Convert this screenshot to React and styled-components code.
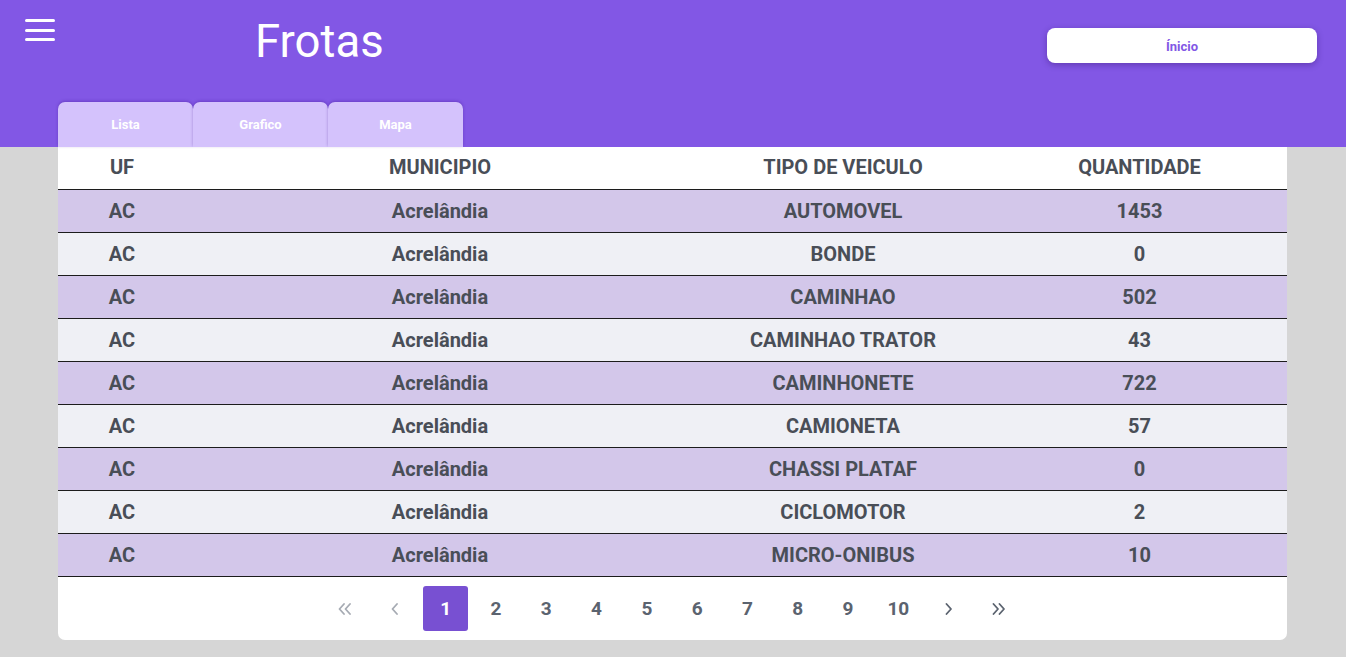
import React from "react";
import styled, { createGlobalStyle } from "styled-components";

const Global = createGlobalStyle`
  html, body { margin: 0; padding: 0; background: #d6d6d6; }
  body { font-family: Roboto, "Liberation Sans", sans-serif; }
  * { box-sizing: border-box; }
`;

const Page = styled.div`
  min-height: 657px;
  background: #d6d6d6;
`;

const Header = styled.header`
  height: 147px;
  background: #8257e5;
  display: flex;
  flex-direction: column;
  justify-content: space-between;
  padding: 0 29px 0 58px;
`;

const TopBar = styled.div`
  position: relative;
  display: flex;
  align-items: flex-start;
`;

const Burger = styled.button`
  position: absolute;
  left: -33px;
  top: 19px;
  width: 30px;
  height: 22px;
  padding: 0;
  border: none;
  background: none;
  display: flex;
  flex-direction: column;
  justify-content: space-between;
  cursor: pointer;
`;

const BurgerLine = styled.span`
  display: block;
  height: 3px;
  border-radius: 2px;
  background: #ffffff;
`;

const Title = styled.h1`
  margin: 15px 0 0 197px;
  font-weight: 400;
  font-size: 45.5px;
  line-height: 54px;
  color: #ffffff;
  flex: 1;
`;

const HomeButton = styled.button`
  margin-top: 28px;
  width: 270px;
  height: 35px;
  border: none;
  border-radius: 8px;
  background: #ffffff;
  color: #8257e5;
  font-family: Roboto, "Liberation Sans", sans-serif;
  font-weight: 700;
  font-size: 13px;
  box-shadow: 0 2px 6px rgba(40, 10, 90, 0.35);
  padding: 2px 0 0;
  cursor: pointer;
`;

const Tabs = styled.nav`
  display: flex;
`;

const Tab = styled.button`
  width: 135px;
  height: 45px;
  border: none;
  border-radius: 7px 7px 0 0;
  background: #d4c2fc;
  color: #ffffff;
  font-family: Roboto, "Liberation Sans", sans-serif;
  font-weight: 700;
  font-size: 13px;
  box-shadow: 0 -1px 3px rgba(60, 20, 140, 0.35);
  padding: 0;
  cursor: pointer;
`;

const Card = styled.main`
  margin: 0 59px 0 58px;
  background: #ffffff;
  border-radius: 0 0 7px 7px;
  overflow: hidden;
`;

const Row = styled.div`
  display: grid;
  grid-template-columns: 128px 508px 298px 295px;
  align-items: center;
  height: 43px;
  background: ${(p) => (p.$head ? "#ffffff" : p.$odd ? "#d3c7ea" : "#eff0f5")};
  border-bottom: 1px solid #1c1c1c;
`;

const Cell = styled.div`
  text-align: center;
  font-weight: 700;
  font-size: 20px;
  color: #494e57;
  padding-bottom: ${(p) => (p.$head ? 3 : 1)}px;
`;

const Pager = styled.div`
  display: flex;
  justify-content: center;
  gap: 5.3px;
  padding: 9px 0 9px;
  margin-left: -1px;
`;

const PageBtn = styled.button`
  width: 45px;
  height: 45px;
  border: none;
  border-radius: 3px;
  background: ${(p) => (p.$active ? "#7850d2" : "transparent")};
  color: ${(p) => (p.$active ? "#ffffff" : p.$muted ? "#a6abb3" : "#5b636f")};
  font-family: Roboto, "Liberation Sans", sans-serif;
  font-weight: 700;
  font-size: 19px;
  display: flex;
  align-items: center;
  justify-content: center;
  padding: 0;
  cursor: pointer;
`;

const Chevron = ({ dir, double }) => {
  const one = dir === "left" ? "M6 1 L1.5 6 L6 11" : "M1.5 1 L6 6 L1.5 11";
  const two = dir === "left" ? "M12 1 L7.5 6 L12 11" : "M7.5 1 L12 6 L7.5 11";
  return (
    <svg width={double ? 14 : 8} height="12" viewBox={double ? "0 0 14 12" : "0 0 8 12"} fill="none" stroke="currentColor" strokeWidth="1.8" strokeLinecap="round" strokeLinejoin="round">
      <path d={one} />
      {double && <path d={two} />}
    </svg>
  );
};

const data = [
  ["AUTOMOVEL", "1453"],
  ["BONDE", "0"],
  ["CAMINHAO", "502"],
  ["CAMINHAO TRATOR", "43"],
  ["CAMINHONETE", "722"],
  ["CAMIONETA", "57"],
  ["CHASSI PLATAF", "0"],
  ["CICLOMOTOR", "2"],
  ["MICRO-ONIBUS", "10"],
];

export default function App() {
  return (
    <Page>
      <Global />
      <Header>
        <TopBar>
          <Burger aria-label="menu">
            <BurgerLine />
            <BurgerLine />
            <BurgerLine />
          </Burger>
          <Title>Frotas</Title>
          <HomeButton>Ínicio</HomeButton>
        </TopBar>
        <Tabs>
          <Tab>Lista</Tab>
          <Tab>Grafico</Tab>
          <Tab>Mapa</Tab>
        </Tabs>
      </Header>
      <Card>
        <Row $head>
          <Cell $head>UF</Cell>
          <Cell $head>MUNICIPIO</Cell>
          <Cell $head>TIPO DE VEICULO</Cell>
          <Cell $head>QUANTIDADE</Cell>
        </Row>
        {data.map(([tipo, qtd], i) => (
          <Row key={tipo} $odd={i % 2 === 0}>
            <Cell>AC</Cell>
            <Cell>Acrelândia</Cell>
            <Cell>{tipo}</Cell>
            <Cell>{qtd}</Cell>
          </Row>
        ))}
        <Pager>
          <PageBtn $muted><Chevron dir="left" double /></PageBtn>
          <PageBtn $muted><Chevron dir="left" /></PageBtn>
          {[1, 2, 3, 4, 5, 6, 7, 8, 9, 10].map((n) => (
            <PageBtn key={n} $active={n === 1}>{n}</PageBtn>
          ))}
          <PageBtn><Chevron dir="right" /></PageBtn>
          <PageBtn><Chevron dir="right" double /></PageBtn>
        </Pager>
      </Card>
    </Page>
  );
}
